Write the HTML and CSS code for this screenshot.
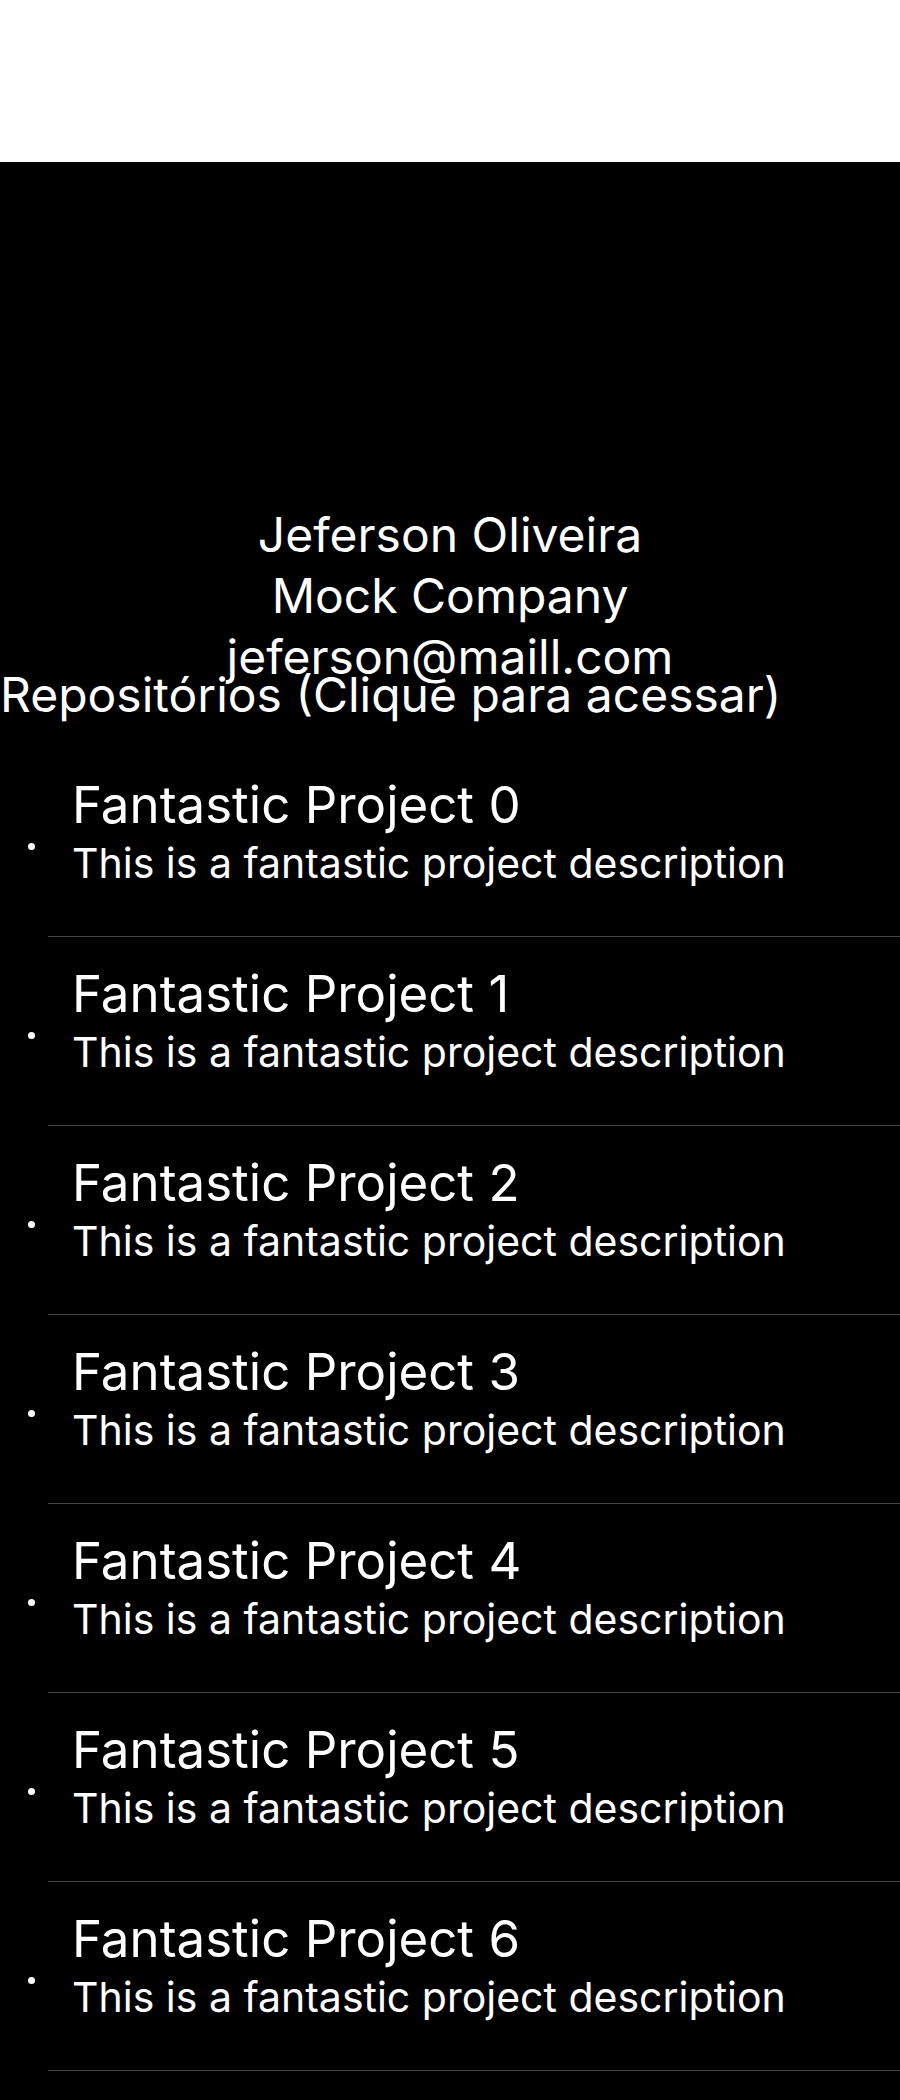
FILE: index.html
```html
<!DOCTYPE html>
<html>
<head>
<meta charset="utf-8">
<link rel="stylesheet" href="styles.css">
</head>
<body>
<div class="topbar"></div>
<main class="screen">
  <section class="profile">
    <div class="line">Jeferson Oliveira</div>
    <div class="line">Mock Company</div>
    <div class="line">jeferson@maill.com</div>
  </section>
  <h2 class="heading">Repositórios (Clique para acessar)</h2>
  <ul class="repos">
    <li class="repo"><span class="dot"></span><div class="texts"><div class="title">Fantastic Project 0</div><div class="desc">This is a fantastic project description</div></div></li>
    <li class="repo"><span class="dot"></span><div class="texts"><div class="title">Fantastic Project 1</div><div class="desc">This is a fantastic project description</div></div></li>
    <li class="repo"><span class="dot"></span><div class="texts"><div class="title">Fantastic Project 2</div><div class="desc">This is a fantastic project description</div></div></li>
    <li class="repo"><span class="dot"></span><div class="texts"><div class="title">Fantastic Project 3</div><div class="desc">This is a fantastic project description</div></div></li>
    <li class="repo"><span class="dot"></span><div class="texts"><div class="title">Fantastic Project 4</div><div class="desc">This is a fantastic project description</div></div></li>
    <li class="repo"><span class="dot"></span><div class="texts"><div class="title">Fantastic Project 5</div><div class="desc">This is a fantastic project description</div></div></li>
    <li class="repo"><span class="dot"></span><div class="texts"><div class="title">Fantastic Project 6</div><div class="desc">This is a fantastic project description</div></div></li>
  </ul>
</main>
</body>
</html>
```
FILE: styles.css
```css
html, body {
  margin: 0;
  padding: 0;
  background: #000;
  overflow: hidden;
}
body {
  font-family: Inter, "Noto Sans", sans-serif;
  color: #fff;
  height: 2100px;
}
.topbar {
  height: 162px;
  background: #fff;
}
.screen {
  background: #000;
}
.profile {
  padding-top: 342px;
  text-align: center;
}
.line {
  font-size: 48px;
  line-height: 61px;
  white-space: nowrap;
}
.heading {
  margin: -18px 0 0 0;
  font-weight: 400;
  font-size: 48px;
  line-height: 52px;
  white-space: nowrap;
  position: relative;
}
.repos {
  list-style: none;
  margin: 27px 0 0 0;
  padding: 0;
}
.repo {
  display: flex;
  align-items: flex-start;
  border-bottom: 1px solid #444446;
  margin-left: 48px;
  padding-top: 26px;
  height: 162px;
}
.dot {
  width: 7px;
  height: 7px;
  border-radius: 50%;
  background: #fff;
  margin-left: -20px;
  margin-top: 69px;
  flex: none;
}
.texts {
  margin-left: 37px;
}
.title {
  font-size: 51px;
  line-height: 62px;
  white-space: nowrap;
}
.desc {
  font-size: 41px;
  line-height: 54px;
  white-space: nowrap;
}
```
